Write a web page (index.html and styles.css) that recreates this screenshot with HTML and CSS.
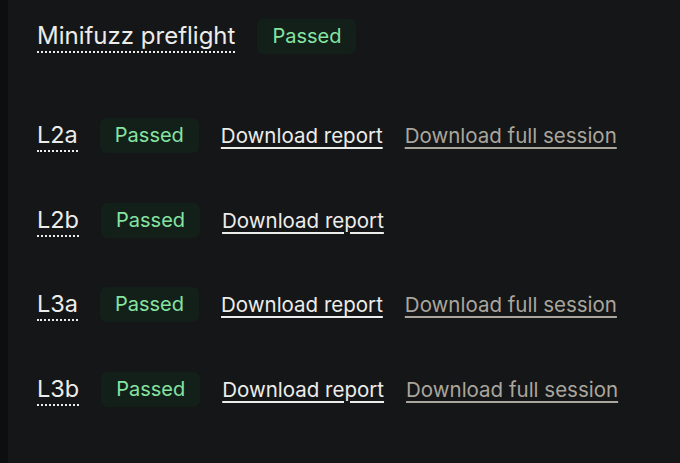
FILE: index.html
```html
<!DOCTYPE html>
<html lang="en">
<head>
    <meta charset="UTF-8" />
    <title>Minifuzz preflight</title>
    <link rel="stylesheet" href="styles.css">
</head>
<body>
<div class="rail"></div>
<main class="panel">
    <div class="row title-row">
        <span class="label title">Minifuzz preflight</span>
        <span class="badge">Passed</span>
    </div>
    <div class="row">
        <span class="label">L2a</span>
        <span class="badge">Passed</span>
        <a href="#" class="link">Download report</a>
        <a href="#" class="link muted">Download full session</a>
    </div>
    <div class="row">
        <span class="label">L2b</span>
        <span class="badge">Passed</span>
        <a href="#" class="link">Download report</a>
    </div>
    <div class="row">
        <span class="label">L3a</span>
        <span class="badge">Passed</span>
        <a href="#" class="link">Download report</a>
        <a href="#" class="link muted">Download full session</a>
    </div>
    <div class="row">
        <span class="label">L3b</span>
        <span class="badge">Passed</span>
        <a href="#" class="link">Download report</a>
        <a href="#" class="link muted">Download full session</a>
    </div>
</main>
</body>
</html>
```

FILE: styles.css
```css
body {
    margin: 0;
    background: #151618;
    font-family: 'Inter', 'Noto Sans', sans-serif;
    display: flex;
    min-height: 100vh;
}
.rail {
    width: 8px;
    background: #0d0e0f;
}
.panel {
    padding: 19px 0 0 29px;
}
.row {
    display: flex;
    align-items: center;
    gap: 22px;
    height: 35px;
    margin-bottom: 49.5px;
}
.title-row {
    margin-bottom: 64px;
}
.label {
    color: #ececea;
    font-size: 23.5px;
    line-height: 26px;
    padding-bottom: 2px;
    border-bottom: 2px dotted #ececea;
    margin-top: 3px;
}
.title {
    font-size: 24px;
}
.badge {
    background: #13201a;
    color: #86e3a0;
    font-size: 20px;
    line-height: 35px;
    padding: 0 15px;
    border-radius: 7px;
}
.link {
    color: #ececea;
    font-size: 20.5px;
    text-decoration: underline;
    text-decoration-thickness: 2px;
    text-underline-offset: 4px;
}
.muted {
    color: #aaa69d;
}
```
